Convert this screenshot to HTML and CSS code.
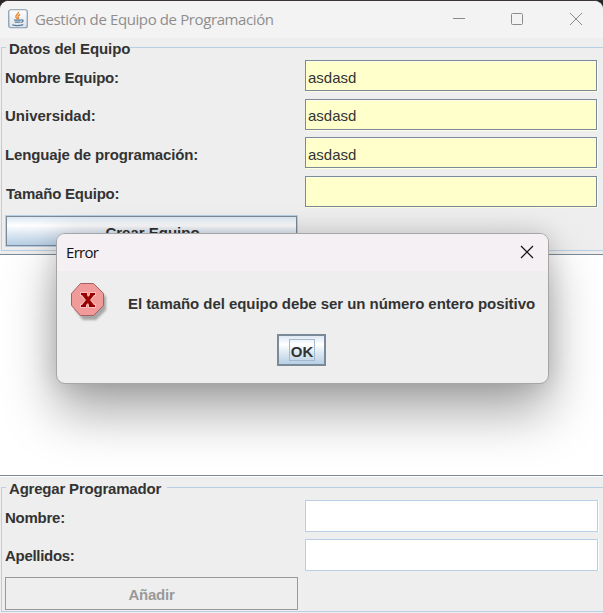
FILE: index.html
```
<!DOCTYPE html>
<html lang="es">
<head>
<meta charset="utf-8">
<title>Gestión de Equipo de Programación</title>
<link rel="stylesheet" href="styles.css">
</head>
<body>
<main class="window">
  <header class="titlebar">
    <svg class="java" width="20" height="20" viewBox="0 0 20 20">
      <defs><linearGradient id="tile" x2="0" y2="1"><stop stop-color="#fff"/><stop offset="1" stop-color="#dce2e8"/></linearGradient></defs>
      <rect x=".75" y=".75" width="18.5" height="18" rx="2" fill="url(#tile)" stroke="#8298ac" stroke-width="1.2"/>
      <path d="M10.5 2.800c.8 2-3.600 3-2.600 5.300.4 1 1.200 1.500 1.600 2.100M12.200 5.500c-2.600 1.200-2.700 2.200-1.800 3.200.4.5.2 1-.2 1.500" fill="none" stroke="#e98b3a" stroke-width="1.4"/>
      <path d="M6 11.200h7M6.800 13.200h5.600M4.200 15.800c2.800 1 7.800.9 11-.2M13 11c3-.6 2.600 2 .2 2.300" fill="none" stroke="#557b9d" stroke-width="1.2"/>
    </svg>
    <h1 class="caption">Gestión de Equipo de Programación</h1>
    <svg class="controls" width="140" height="20" viewBox="0 0 140 20" fill="none" stroke="#8c8c8c" stroke-width="1">
      <path d="M3 9.500h12"/>
      <rect x="61.500" y="4.500" width="11" height="11" rx="1"/>
      <path d="M120 4l12 12M132 4l-12 12"/>
    </svg>
  </header>
  <section class="panel team">
    <h2 class="legend"><span class="t-datos">Datos del Equipo</span></h2>
    <div class="row"><label class="label t-ne">Nombre Equipo:</label><div class="field filled">asdasd</div></div>
    <div class="row short"><label class="label">Universidad:</label><div class="field filled">asdasd</div></div>
    <div class="row"><label class="label t-le">Lenguaje de programación:</label><div class="field filled">asdasd</div></div>
    <div class="row"><label class="label t-ta">Tamaño Equipo:</label><div class="field filled"></div></div>
    <button class="button create">Crear Equipo</button>
  </section>
  <section class="list"></section>
  <section class="panel member">
    <h2 class="legend wide"><span class="t-ag">Agregar Programador</span></h2>
    <div class="row"><label class="label t-no">Nombre:</label><div class="field"></div></div>
    <div class="row short"><label class="label t-ap">Apellidos:</label><div class="field"></div></div>
    <button class="button add" disabled>Añadir</button>
  </section>
</main>
<div class="dialog" role="dialog">
  <header class="dialog-bar">
    <span class="dialog-title">Error</span>
    <svg width="14" height="14" viewBox="0 0 14 14" stroke="#111" stroke-width="1.2"><path d="M1 1l12 12M13 1L1 13"/></svg>
  </header>
  <div class="dialog-body">
    <svg class="stop" width="40" height="42" viewBox="0 0 40 42">
      <defs><filter id="soft" x="-20%" y="-20%" width="140%" height="140%"><feGaussianBlur stdDeviation="1.3"/></filter></defs>
      <path d="M13 5h13l10 10v13l-10 10H13L5 28V15z" fill="#777" opacity=".6" filter="url(#soft)"/>
      <path d="M10.500 1.500h13l10 10v12l-10 10h-13l-9-10v-12z" fill="#f09a9a" stroke="#a85f62"/>
      <path d="M11 11h6v2l1 2 2-2v-2h5v2h-1l-4 5 4 5h1v2h-6v-2l-1-2-2 2v2h-5v-2h1l4-5-4-5h-1z" fill="#980000" stroke="#f9bcbc" stroke-width="2" paint-order="stroke"/>
    </svg>
    <p class="message">El tamaño del equipo debe ser un número entero positivo</p>
    <button class="button ok"><span class="focus">OK</span></button>
  </div>
</div>
</body>
</html>
```
FILE: styles.css
```
* { box-sizing: border-box; }
body {
  margin: 0;
  width: 603px;
  height: 613px;
  overflow: hidden;
  background: #2b2629;
  font: bold 15px/17px "Liberation Sans", Arial, sans-serif;
  color: #333;
}
.window {
  display: flex;
  flex-direction: column;
  height: 613px;
  border-top: 1px solid #3a3437;
  border-radius: 9px 9px 0 0;
  background: #eee;
  overflow: hidden;
}
.titlebar {
  display: flex;
  flex: none;
  align-items: flex-start;
  height: 37px;
  padding: 8px 13px 0 8px;
  background: #f3f3f3;
}
.caption {
  flex: 1;
  margin: 0 0 0 7px;
  font: 15px/20px "Open Sans", "Noto Sans", sans-serif;
  letter-spacing: -0.39px;
  color: #8e8e8e;
  white-space: nowrap;
}
.panel {
  flex: none;
  margin-left: 1px;
  border: 1px solid #b8cfe5;
  border-right: 0;
  padding-left: 3px;
}
.team { height: 204px; margin-top: 9px; }
.member { height: 125px; margin-top: 10px; }
.legend {
  width: 124px;
  height: 17px;
  margin: -8px 0 3px 1px;
  padding-left: 3px;
  background: #eee;
  font: inherit;
  white-space: nowrap;
}
.wide { width: 161px; }
.row {
  display: grid;
  grid-template-columns: 300px 293px;
  height: 39px;
}
.row.short { height: 38px; }
.label { padding-top: 9px; white-space: nowrap; }
.row.short .label { padding-top: 8px; }
.t-datos { letter-spacing: -0.07px; }
.t-ne { letter-spacing: -0.2px; }
.t-le { letter-spacing: -0.14px; }
.t-ta { padding-left: 1px; letter-spacing: -0.22px; }
.t-ag { letter-spacing: -0.2px; }
.t-no { letter-spacing: -0.25px; }
.t-ap { letter-spacing: -0.3px; }
.field {
  height: 32px;
  border: 1px solid #b8cfe5;
  background: #fff;
  padding: 8px 2px 0;
  font-weight: normal;
  box-shadow: 1px 0 #fff;
}
.filled {
  width: 292px;
  height: 31px;
  border-color: #7a8a99;
  background: #ffffcc;
  box-shadow: inset 0 1px #ffffe8, 1px 1px #ffffe2;
}
.row.short .filled { padding-top: 7px; }
.button {
  display: block;
  width: 293px;
  height: 33px;
  padding: 2px 0 0;
  border: 1px solid #999;
  border-radius: 0;
  background: #eee;
  font: inherit;
  color: #999;
}
.add { letter-spacing: -0.25px; }
.create {
  height: 32px;
  padding-left: 2px;
  border: 2px solid #7a8a99;
  outline: 1px solid #b8cfe5;
  outline-offset: -1px;
  color: #333;
  background: linear-gradient(#dde8f3, #fff 30%, #dde8f3 60%, #b8cfe5);
}
.list {
  flex: none;
  height: 223px;
  margin-top: 3px;
  border-top: 1px solid #7a8a99;
  border-bottom: 1px solid #fff;
  box-shadow: inset 0 -1px #7a8a99;
  background: #fff;
}
.dialog {
  position: absolute;
  left: 56px;
  top: 233px;
  width: 493px;
  height: 151px;
  border: 1px solid #a5a5a5;
  border-radius: 9px;
  overflow: hidden;
  background: #eee;
  box-shadow: 0 28px 52px rgba(0, 0, 0, .35), 0 0 24px rgba(0, 0, 0, .14);
}
.dialog-bar {
  display: flex;
  justify-content: space-between;
  height: 37px;
  padding: 11px 14px 0 9px;
  background: #f5f0f3;
}
.dialog-title {
  margin-top: -3px;
  font: 15px/20px "Open Sans", "Noto Sans", sans-serif;
  letter-spacing: -0.7px;
  color: #111;
}
.dialog-body {
  display: grid;
  grid-template-columns: 58px 1fr;
  grid-template-rows: 52px 32px;
  padding: 11px 0 0 13px;
}
.message { margin: 13px 0 0; white-space: nowrap; letter-spacing: -0.055px; }
.ok {
  grid-column: 1 / 3;
  width: 49px;
  margin: 0 0 0 207px;
  height: 32px;
  padding: 0;
  border: 2px solid #7a8a99;
  color: #333;
  background: linear-gradient(#dde8f3, #fff 30%, #dde8f3 60%, #b8cfe5);
}
.focus {
  display: block;
  width: 26px;
  height: 22px;
  margin: 0 auto;
  padding: 3px 0 0 1px;
  border: 1px solid #a3b8cc;
}
```
